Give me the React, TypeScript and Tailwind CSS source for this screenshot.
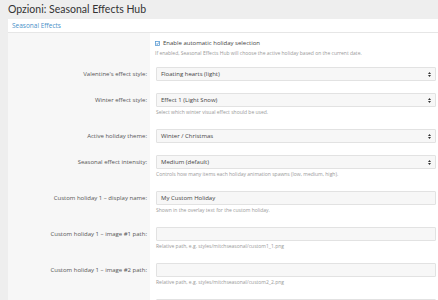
import type { ReactNode } from "react";

type Field = {
  label: string;
  kind: "select" | "text";
  value?: string;
  help?: string;
};

const fields: Field[] = [
  { label: "Valentine's effect style:", kind: "select", value: "Floating hearts (light)" },
  {
    label: "Winter effect style:",
    kind: "select",
    value: "Effect 1 (Light Snow)",
    help: "Select which winter visual effect should be used.",
  },
  { label: "Active holiday theme:", kind: "select", value: "Winter / Christmas" },
  {
    label: "Seasonal effect intensity:",
    kind: "select",
    value: "Medium (default)",
    help: "Controls how many items each holiday animation spawns (low, medium, high).",
  },
  {
    label: "Custom holiday 1 – display name:",
    kind: "text",
    value: "My Custom Holiday",
    help: "Shown in the overlay text for the custom holiday.",
  },
  {
    label: "Custom holiday 1 – image #1 path:",
    kind: "text",
    value: "",
    help: "Relative path, e.g. styles/mitchseasonal/custom1_1.png",
  },
  {
    label: "Custom holiday 1 – image #2 path:",
    kind: "text",
    value: "",
    help: "Relative path, e.g. styles/mitchseasonal/custom2_2.png",
  },
  { label: "", kind: "text", value: "" },
];

function SelectArrows() {
  return (
    <svg width="3" height="5" viewBox="0 0 3 5" className="shrink-0">
      <path d="M1.5 0 L3 2 L0 2 Z" fill="#333" />
      <path d="M1.5 5 L3 3 L0 3 Z" fill="#333" />
    </svg>
  );
}

function Row({ label, children }: { label: string; children: ReactNode }) {
  return (
    <>
      <div className="bg-[#f7f7f7] pt-[6px] pr-[3px] text-right">
        <div className="h-[14px] text-[6px] leading-[14px] text-[#555]">{label}</div>
      </div>
      <div className="pt-[6px] pb-[6px] pl-[6px] pr-[2px]">{children}</div>
    </>
  );
}

export default function App() {
  return (
    <div className="min-h-screen overflow-hidden bg-[#eeeeee] pl-2 font-['Open_Sans',sans-serif]">
      <h1 className="pt-[1px] font-['Lato',sans-serif] text-[10.5px] leading-[16px] text-[#333]">
        Opzioni: Seasonal Effects Hub
      </h1>
      <div className="mt-[2px] bg-white">
        <div className="h-[14px] border-b border-[#e6e6e6] px-[4px] text-[6.5px] leading-[13px] text-[#4a90c8]">
          Seasonal Effects
        </div>
        <div className="grid grid-cols-[142px_1fr]">
          <div className="bg-[#f7f7f7]" />
          <div className="pt-[6px] pb-[3px] pl-[5px]">
            <label className="flex h-[9px] items-center gap-[3px] text-[6px] text-[#444]">
              <svg width="5" height="5" viewBox="0 0 5 5" className="shrink-0">
                <rect x="0.5" y="0.5" width="4" height="4" fill="#fff" stroke="#5b9dd5" strokeWidth="0.8" />
                <path d="M1.3 2.6 L2.2 3.5 L3.8 1.5" fill="none" stroke="#3a7fc0" strokeWidth="0.8" />
              </svg>
              Enable automatic holiday selection
            </label>
            <p className="mt-[1px] text-[5px] leading-[9px] text-[#999]">
              If enabled, Seasonal Effects Hub will choose the active holiday based on the current date.
            </p>
          </div>
          {fields.map((f, i) => (
            <Row key={i} label={f.label}>
              <div className="flex h-[14px] items-center justify-between rounded-[1px] border border-[#e2e2e2] bg-[#f7f7f7] px-[4px] text-[6px] text-[#444]">
                <span>{f.value}</span>
                {f.kind === "select" && <SelectArrows />}
              </div>
              {f.help && (
                <p className="mt-[1px] text-[5px] leading-[9px] text-[#999]">{f.help}</p>
              )}
            </Row>
          ))}
        </div>
      </div>
    </div>
  );
}
